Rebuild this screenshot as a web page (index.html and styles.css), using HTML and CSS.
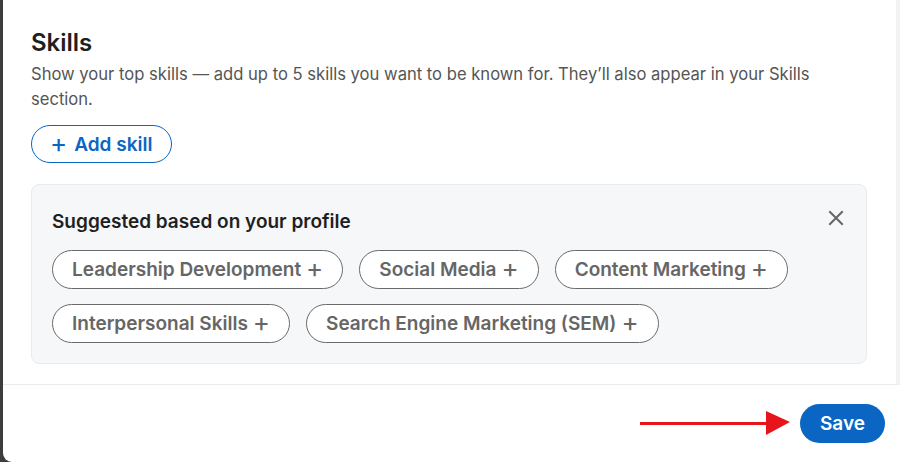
FILE: index.html
```html
<!DOCTYPE html>
<html>
<head>
<meta charset="utf-8">
<link rel="stylesheet" href="styles.css">
</head>
<body>
<div class="dialog">
  <div class="content">
    <h2 class="title">Skills</h2>
    <p class="desc">Show your top skills — add up to 5 skills you want to be known for. They’ll also appear in your Skills section.</p>
    <button class="add-btn"><span class="plus">+</span> Add skill</button>
    <div class="suggest">
      <div class="suggest-head">
        <h3 class="suggest-title">Suggested based on your profile</h3>
        <svg class="close" width="16" height="16" viewBox="0 0 16 16"><path d="M2 2 L14 14 M14 2 L2 14" stroke="#666" stroke-width="2" stroke-linecap="square"/></svg>
      </div>
      <div class="pills">
        <button class="pill">Leadership Development <span class="pplus">+</span></button>
        <button class="pill">Social Media <span class="pplus">+</span></button>
        <button class="pill">Content Marketing <span class="pplus">+</span></button>
        <button class="pill">Interpersonal Skills <span class="pplus">+</span></button>
        <button class="pill">Search Engine Marketing (SEM) <span class="pplus">+</span></button>
      </div>
    </div>
  </div>
  <div class="footer">
    <svg class="arrow" width="150" height="28" viewBox="0 0 150 28"><path d="M0 14.5 H130" stroke="#e8141b" stroke-width="3"/><path d="M126 2 L150 13 L126 26 Z" fill="#e8141b"/></svg>
    <button class="save">Save</button>
  </div>
</div>
</body>
</html>
```
FILE: styles.css
```css
* { box-sizing: border-box; }
html, body { margin: 0; padding: 0; }
body {
  background: #3d3d3d;
  width: 900px;
  height: 462px;
  overflow: hidden;
  font-family: Inter, "Noto Sans", sans-serif;
}
.dialog {
  margin-left: 3px;
  height: 462px;
  background: #fff;
  border-bottom-left-radius: 9px;
  display: flex;
  flex-direction: column;
  overflow: hidden;
}
.content {
  height: 385px;
  flex: none;
  padding: 28px 29px 0 28px;
  border-bottom: 1px solid #ebebeb;
  border-right: 4px solid #f3f3f3;
}
.title {
  margin: 0;
  font-size: 24px;
  line-height: 30px;
  font-weight: 600;
  color: #1f1f1f;
}
.desc {
  margin: 4px 0 0;
  max-width: 800px;
  font-size: 16.6px;
  line-height: 25px;
  color: #555;
  font-weight: 400;
}
.add-btn {
  margin-top: 13px;
  height: 38px;
  padding: 0 19px 0 18px;
  border: 1px solid #0a66c2;
  border-radius: 19px;
  background: #fff;
  color: #0a66c2;
  font-family: inherit;
  font-size: 19px;
  font-weight: 600;
  display: flex;
  align-items: center;
  gap: 7px;
}
.plus { font-size: 26px; font-weight: 400; line-height: 1; margin-top: -3px; }
.suggest {
  margin-top: 21px;
  background: #f5f7f9;
  border: 1px solid #e9ebee;
  border-radius: 8px;
  padding: 20px 20px 20px 20px;
}
.suggest-head {
  display: flex;
  justify-content: space-between;
  align-items: flex-start;
}
.suggest-title {
  margin: 1px 0 0;
  font-size: 19px;
  line-height: 32px;
  font-weight: 600;
  color: #1f1f1f;
}
.close { margin-top: 5px; margin-right: 2px; }
.pills {
  margin-top: 12px;
  display: flex;
  flex-wrap: wrap;
  gap: 15px 16px;
}
.pill {
  height: 39px;
  padding: 0 19px 0 19px;
  border: 1px solid #6a6a6a;
  border-radius: 20px;
  background: #fff;
  color: #666;
  font-family: inherit;
  font-size: 19px;
  font-weight: 600;
  display: flex;
  align-items: center;
  gap: 5px;
}
.pplus { font-size: 26px; font-weight: 400; line-height: 1; margin-top: -3px; }
.footer {
  flex: 1;
  display: flex;
  justify-content: flex-end;
  align-items: center;
  padding-right: 15px;
}
.arrow { margin-right: 10px; margin-top: -2px; }
.save {
  width: 85px;
  height: 39px;
  border: none;
  border-radius: 20px;
  background: #0a66c2;
  color: #fff;
  font-family: inherit;
  font-size: 19px;
  font-weight: 600;
}
```
